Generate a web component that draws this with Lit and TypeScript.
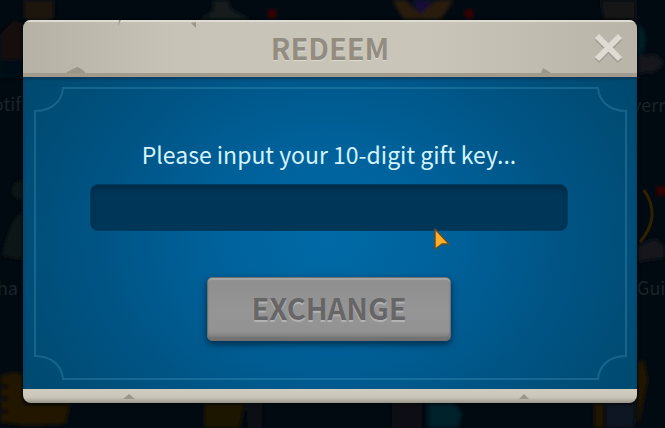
import { LitElement, html, css, svg } from "lit";
import { customElement, state } from "lit/decorators.js";

@customElement("game-backdrop")
class GameBackdrop extends LitElement {
  static styles = css`
    :host { display: block; overflow: hidden; background: #010a11; }
    svg { display: block; width: 100%; height: 100%; }
    .label { font: 18px "Noto Sans CJK SC", "Noto Sans", sans-serif; fill: #1c2429; }
  `;

  render() {
    return html`
      <svg viewBox="0 0 665 428" preserveAspectRatio="xMidYMid slice" aria-hidden="true">
        <defs>
          <filter id="soft"><feGaussianBlur stdDeviation="2" /></filter>
        </defs>
        ${svg`
          <g filter="url(#soft)">
            <path d="M24 0h30v18l-14 8-16-8z" fill="#1c1508" />
            <path d="M0 34l14-14 10 4v34l-14 10-10-4z" fill="#170d08" />
            <path d="M0 60h22v18H0z" fill="#040b18" />
            <path d="M198 20l14-8 2-12h14l4 10 20 10z" fill="#191a1b" />
            <path d="M392 0h14l14 14 16-14h18l-14 20h-36z" fill="#2b1d0c" />
            <path d="M412 0h20l-8 12h-6z" fill="#161037" />
            <path d="M600 0h36v20h-32z" fill="#141218" />
            <path d="M637 24c12 6 10 26 0 34z" fill="#06202a" />
            <path d="M637 56l18-2 10 8-8 10-20 2z" fill="#15171c" />
            <circle cx="22" cy="190" r="10" fill="#101318" />
            <path d="M2 256c4-24 12-40 22-46v50z" fill="#111317" />
            <path d="M637 246l18-8 10 8v12l-28 4z" fill="#13121a" />
            <path d="M0 376l14-4 10 2v30h46l-4 20-40 2-26-4z" fill="#211803" />
            <path d="M0 384h8v5H0zM0 396h8v5H0zM0 409h8v5H0z" fill="#0c0d0a" />
            <path d="M204 403h40l-4 25h-36z" fill="#1d1503" />
            <path d="M246 403h16v25h-14z" fill="#0f1118" />
            <path d="M392 403h30v25h-30z" fill="#0c1016" />
            <path d="M428 403h26l8 10-4 15h-30z" fill="#04222a" />
            <path d="M594 403h10v25h-10zM636 362l8-2 4 20-10 48z" fill="#221902" />
            <path d="M606 403h28v25h-28z" fill="#0d1420" />
          </g>
          <circle cx="272" cy="14" r="5" fill="#3b0305" filter="url(#soft)" />
          <circle cx="469" cy="14" r="5" fill="#3b0305" filter="url(#soft)" />
          <circle cx="661" cy="191" r="5" fill="#3b0305" filter="url(#soft)" />
          <path d="M644 190q18 26-4 52" fill="none" stroke="#2f2203" stroke-width="3" />
          <text class="label" x="21" y="111" text-anchor="end">otif</text>
          <text class="label" x="18" y="295" text-anchor="end">ha</text>
          <text class="label" x="632" y="112">vern</text>
          <text class="label" x="637" y="295">Guid</text>
        `}
      </svg>
    `;
  }
}

@customElement("ornate-frame")
class OrnateFrame extends LitElement {
  static styles = css`
    :host {
      display: grid;
      grid-template: 26px 1fr 26px / 30px 1fr 30px;
      pointer-events: none;
      --line: rgba(80, 165, 200, 0.27);
    }
    svg { display: block; width: 30px; height: 26px; }
    path { fill: none; stroke: var(--line); stroke-width: 2; }
    .tr { transform: scaleX(-1); }
    .bl { transform: scaleY(-1); }
    .br { transform: scale(-1, -1); }
    .top { border-top: 2px solid var(--line); }
    .bottom { border-bottom: 2px solid var(--line); }
    .left { border-left: 2px solid var(--line); }
    .right { border-right: 2px solid var(--line); }
  `;

  private corner(name: string) {
    return html`<svg class=${name} viewBox="0 0 30 26"><path d="M30 1H29C28 14 18 24 1 24V26" /></svg>`;
  }

  render() {
    return html`
      ${this.corner("tl")}<div class="top"></div>${this.corner("tr")}
      <div class="left"></div><div></div><div class="right"></div>
      ${this.corner("bl")}<div class="bottom"></div>${this.corner("br")}
    `;
  }
}

@customElement("app-root")
class AppRoot extends LitElement {
  static styles = css`
    :host {
      display: grid;
      position: relative;
      min-height: 100vh;
      box-sizing: border-box;
      padding: 20px 28px 24px 23px;
      align-items: start;
      font-family: "Noto Sans CJK SC", "Noto Sans", sans-serif;
    }
    game-backdrop { position: absolute; inset: 0; }
    .dialog {
      position: relative;
      border-radius: 8px;
      overflow: hidden;
      box-shadow: 0 0 4px rgba(0, 0, 0, 0.7);
    }
    header {
      position: relative;
      display: grid;
      grid-template-columns: 56px 1fr 56px;
      align-items: center;
      height: 57px;
      box-sizing: border-box;
      border-bottom: 4px solid #a09b8d;
      background: linear-gradient(90deg, #b5b1a5, #c7c3b7 25%, #cac5b9 65%, #b8b4a8);
      box-shadow: inset 0 2px 1px #dfddd5;
    }
    h1 {
      grid-column: 2;
      margin: 0;
      text-align: center;
      font-size: 29px;
      line-height: 36px;
      font-weight: 700;
      color: #928c81;
      text-shadow: 0 1px 1px #dedbd2;
    }
    .close {
      justify-self: center;
      width: 36px;
      height: 36px;
      padding: 0;
      border: 0;
      background: none;
    }
    .close svg { display: block; width: 36px; height: 36px; }
    .chip { position: absolute; display: block; fill: #9b9688; }
    .chip-a { left: 44px; bottom: 0; }
    .chip-b { right: 86px; bottom: 0; }
    .chip-c { left: 168px; top: 0; }
    .chip-d { left: 94px; top: 0; }
    .chip-e { left: 100px; bottom: 4px; }
    .chip-f { right: 108px; bottom: 4px; }
    form {
      position: relative;
      display: flex;
      flex-direction: column;
      align-items: center;
      padding: 60px 69px 48px 67px;
      background: radial-gradient(ellipse 56% 90% at 50% 52%, #006aa6, #00619a 35%, #005484 68%, #004a71);
      box-shadow: inset 0 2px 3px rgba(0, 45, 75, 0.6);
    }
    ornate-frame { position: absolute; inset: 10px 10px 9px 11px; }
    label {
      font-size: 23px;
      line-height: 34px;
      color: #d5f3ff;
    }
    input {
      width: 100%;
      height: 47px;
      margin: 13px 0 46px;
      box-sizing: border-box;
      padding: 0 16px;
      border: 1px solid #003c62;
      border-radius: 8px;
      outline: 0;
      background: #003657;
      box-shadow: inset 0 4px 4px #002b49;
      color: #d5f3ff;
      font: inherit;
      font-size: 23px;
    }
    .exchange {
      width: 244px;
      height: 64px;
      padding: 0 0 4px;
      border: 1px solid #6f7072;
      border-radius: 5px;
      background: linear-gradient(#8e8e8f, #969596 50%, #949394 85%, #777778);
      box-shadow: inset 0 2px 1px #a6a6a7, inset 0 -3px 2px #727273, 0 3px 7px rgba(0, 20, 40, 0.7);
      color: #666667;
      font: inherit;
      font-size: 29px;
      font-weight: 700;
      line-height: 40px;
      text-shadow: 0 2px 1px #b5b5b5;
    }
    footer {
      position: relative;
      height: 14px;
      background: linear-gradient(#d0ccbf, #c9c5b9 60%, #99958a);
    }
    .pointer {
      position: absolute;
      left: 409px;
      top: 206px;
      width: 20px;
      height: 26px;
      pointer-events: none;
    }
  `;

  @state() private code = "";

  private chip(name: string, width: number, height: number, shape: string) {
    return html`<svg class="chip ${name}" width=${width} height=${height} aria-hidden="true"><path d=${shape} /></svg>`;
  }

  render() {
    return html`
      <game-backdrop></game-backdrop>
      <section class="dialog" role="dialog" aria-labelledby="title">
        <header>
          <h1 id="title">REDEEM</h1>
          <button class="close" type="button" aria-label="Close">
            <svg viewBox="0 0 36 36">
              <path d="M6 9L29 32M29 9L6 32" stroke="#969186" stroke-width="6" fill="none" opacity=".7" />
              <path d="M6 7L29 30M29 7L6 30" stroke="#dedbd3" stroke-width="6" fill="none" />
            </svg>
          </button>
          ${this.chip("chip-a", 18, 6, "M0 5L6 2 10 0 13 1 18 5V6H0z")}
          ${this.chip("chip-b", 10, 5, "M0 5L2 0 10 5z")}
          ${this.chip("chip-c", 6, 8, "M0 3L5 2V8z")}
          ${this.chip("chip-d", 4, 6, "M2 0H4L1 6z")}
        </header>
        <form @submit=${(e: Event) => e.preventDefault()}>
          <ornate-frame></ornate-frame>
          <label for="key">Please input your 10-digit gift key...</label>
          <input
            id="key"
            maxlength="10"
            autocomplete="off"
            .value=${this.code}
            @input=${(e: Event) => (this.code = (e.target as HTMLInputElement).value)}
          />
          <button class="exchange">EXCHANGE</button>
        </form>
        <footer>
          ${this.chip("chip-e", 12, 5, "M0 5L6 0 12 5z")}
          ${this.chip("chip-f", 10, 5, "M0 5L5 0 10 5z")}
        </footer>
        <svg class="pointer" viewBox="0 0 20 26" aria-hidden="true">
          <path d="M3 3L17 18 10 18 3 23z" fill="#ffad27" stroke="#604e2c" stroke-width="1.5" stroke-linejoin="round" />
        </svg>
      </section>
    `;
  }
}
